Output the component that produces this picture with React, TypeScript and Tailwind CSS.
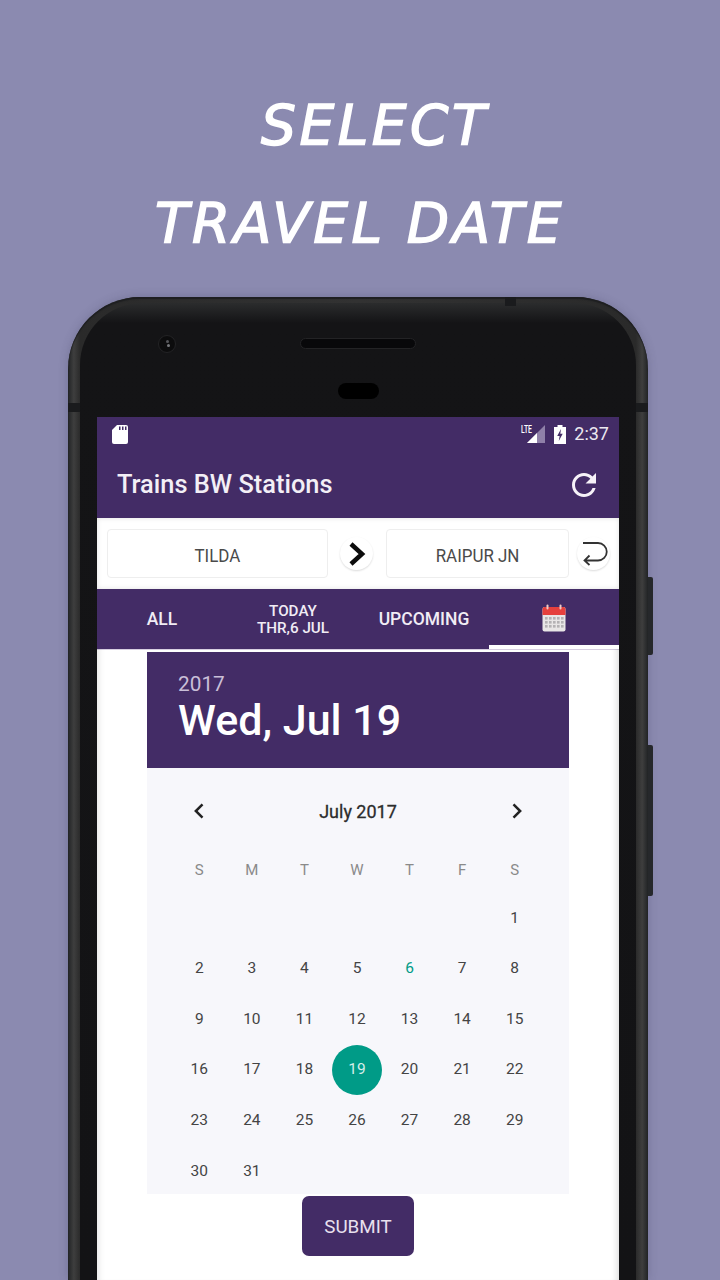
const purple = 'bg-[#432c66]'

const weeks = [
  ['', '', '', '', '', '', '1'],
  ['2', '3', '4', '5', '6', '7', '8'],
  ['9', '10', '11', '12', '13', '14', '15'],
  ['16', '17', '18', '19', '20', '21', '22'],
  ['23', '24', '25', '26', '27', '28', '29'],
  ['30', '31', '', '', '', '', ''],
]

function SdIcon() {
  return (
    <svg width="16" height="19" viewBox="0 0 16 19">
      <path d="M5 0h9a2 2 0 0 1 2 2v15a2 2 0 0 1-2 2H2a2 2 0 0 1-2-2V5z" fill="#fff" />
      <path d="M7 1.5h1.5v3.5H7zM10 1.5h1.5v3.5H10zM13 1.5h1.5v3.5H13z" fill="#432c66" />
    </svg>
  )
}

function SignalIcon() {
  return (
    <svg width="25" height="20" viewBox="0 0 25 20">
      <path d="M24 1v18H6z" fill="#8f80a8" />
      <path d="M16 9v10H6z" fill="#fff" />
      <text x="0" y="8.5" fill="#fff" fontSize="10" fontWeight="500" fontFamily="Roboto" textLength="11" lengthAdjust="spacingAndGlyphs">LTE</text>
    </svg>
  )
}

function BatteryIcon() {
  return (
    <svg width="12" height="19" viewBox="0 0 12 19">
      <path d="M3.5 0h5v2H12v17H0V2h3.5z" fill="#fff" />
      <path d="M7 4 3.2 11h2.4L4.8 16 8.7 8.8H6.3z" fill="#432c66" />
    </svg>
  )
}

function RefreshIcon() {
  return (
    <svg width="36" height="36" viewBox="0 0 24 24" fill="#f6f2f8">
      <path d="M17.65 6.35C16.2 4.9 14.21 4 12 4c-4.42 0-7.99 3.58-7.99 8s3.57 8 7.99 8c3.73 0 6.84-2.55 7.73-6h-2.08c-.82 2.33-3.04 4-5.65 4-3.31 0-6-2.69-6-6s2.69-6 6-6c1.66 0 3.14.69 4.22 1.78L13 11h7V4l-2.35 2.35z" />
    </svg>
  )
}

function CalendarIcon() {
  return (
    <svg width="24" height="28" viewBox="0 0 24 28">
      <rect x="0.5" y="3" width="23" height="24.5" rx="2" fill="#e8e6e6" />
      <path d="M0.5 11V5a2 2 0 0 1 2-2h19a2 2 0 0 1 2 2v6z" fill="#e5403d" />
      <rect x="4.5" y="0.5" width="2" height="5" rx="1" fill="#f1c9c4" />
      <rect x="17.5" y="0.5" width="2" height="5" rx="1" fill="#f1c9c4" />
      <g fill="#b4b2b4">
        {[13, 17, 21].map((y) =>
          [3, 7, 11, 15, 19].map((x) => <rect key={`${x}-${y}`} x={x} y={y} width="2.6" height="2.6" />),
        )}
      </g>
    </svg>
  )
}

function RoundButton({ children }: { children: React.ReactNode }) {
  return (
    <div className="flex h-[33px] w-[33px] items-center justify-center rounded-full bg-white shadow-[0_1px_2px_rgba(0,0,0,0.14)]">
      {children}
    </div>
  )
}

function Station({ name, width }: { name: string; width: string }) {
  return (
    <div className={`${width} flex h-[49px] items-center justify-center rounded-[4px] border border-[#eeeeee] bg-white pt-[3px] text-[18px] text-[#4a4a4a]`}>
      <span className="[transform:scaleX(0.94)]">{name}</span>
    </div>
  )
}

function Tabs() {
  return (
    <div className={`flex h-[60px] ${purple} text-[#f1ecf5] shadow-[0_1px_0_#d8d0e2]`}>
      <div className="flex w-[130px] items-center justify-center pt-[1px] text-[17.5px] font-medium">ALL</div>
      <div className="flex w-[132px] flex-col items-center justify-center pt-[2px] text-[15.2px] font-medium leading-[17px]">
        <span>TODAY</span>
        <span>THR,6 JUL</span>
      </div>
      <div className="flex w-[130px] items-center justify-center pt-[1px] text-[17.5px] font-medium">UPCOMING</div>
      <div className="flex w-[130px] items-center justify-center border-b-[4px] border-white pt-[1px]">
        <CalendarIcon />
      </div>
    </div>
  )
}

function CalendarCard() {
  return (
    <div className="mx-auto w-[422px] pt-[3px]">
      <div className={`flex h-[116px] flex-col ${purple} pl-[31px] pt-[20px]`}>
        <span className="text-[20.8px] leading-[24px] text-[#c9bfd8]">2017</span>
        <span className="text-[43px] font-medium leading-[48px] text-white">Wed, Jul 19</span>
      </div>
      <div className="h-[426px] bg-[#f7f7fb] pl-[26px] pr-[28px]">
        <div className="flex h-[86px] items-center justify-between pl-[17px] pr-[15px] text-[#222222]">
          <svg width="20" height="20" viewBox="0 0 24 24" fill="none" stroke="#222222" strokeWidth="3">
            <path d="m15 4-8 8 8 8" />
          </svg>
          <span className="text-[18px] text-[#2c2c2c] [-webkit-text-stroke:0.3px_#2c2c2c]">July 2017</span>
          <svg width="20" height="20" viewBox="0 0 24 24" fill="none" stroke="#222222" strokeWidth="3">
            <path d="m9 4 8 8-8 8" />
          </svg>
        </div>
        <div className="mt-[1px] grid h-[30px] grid-cols-7 items-center text-center text-[15px] text-[#8a8a8a]">
          {['S', 'M', 'T', 'W', 'T', 'F', 'S'].map((d, i) => (
            <span key={i}>{d}</span>
          ))}
        </div>
        <div className="mt-[8px] grid grid-cols-7 grid-rows-[repeat(6,50.6px)] text-[15.5px] text-[#444444]">
          {weeks.flat().map((d, i) => (
            <div key={i} className="flex items-center justify-center">
              {d === '19' ? (
                <span className="mb-[1px] flex h-[50px] w-[50px] items-center justify-center rounded-full bg-[#009b87] text-[#d5eeea]">19</span>
              ) : (
                <span className={d === '6' ? 'text-[#009b87]' : ''}>{d}</span>
              )}
            </div>
          ))}
        </div>
      </div>
      <div className={`mx-auto mt-[2px] flex h-[60px] w-[112px] items-center justify-center rounded-[7px] ${purple} pt-[2px] text-[18.8px] text-[#e8e0ee]`}>
        SUBMIT
      </div>
    </div>
  )
}

function Screen() {
  return (
    <div className="flex h-[863px] flex-col overflow-hidden bg-white">
      <div className={`flex h-[34px] shrink-0 items-center justify-between ${purple} pl-[15px] pr-[10px] text-white`}>
        <SdIcon />
        <div className="flex items-center gap-[8px]">
          <SignalIcon />
          <BatteryIcon />
          <span className="pb-[1px] text-[18px] leading-none text-[#ece8f0]">2:37</span>
        </div>
      </div>
      <div className={`flex h-[67px] shrink-0 items-center justify-between ${purple} pl-[20px] pr-[17px]`}>
        <span className="text-[25.4px] font-medium text-[#f3eff6]">Trains BW Stations</span>
        <RefreshIcon />
      </div>
      <div className="flex h-[71px] shrink-0 items-center pl-[10px] [box-shadow:inset_0_0_5px_rgba(0,0,0,0.12)]">
        <Station name="TILDA" width="w-[221px]" />
        <div className="ml-[12px] mr-[13px]">
          <RoundButton>
            <svg width="22" height="26" viewBox="0 0 22 26" fill="none" stroke="#0c0c0c" strokeWidth="4.5">
              <path d="m5 3 11 10L5 23" />
            </svg>
          </RoundButton>
        </div>
        <Station name="RAIPUR JN" width="w-[183px]" />
        <div className="ml-[8px]">
          <RoundButton>
            <svg width="28" height="26" viewBox="0 0 28 26" fill="none" stroke="#333333" strokeWidth="1.8">
              <path d="M3 2h15a8.75 8.75 0 0 1 0 17.5H5M9.5 14.5l-5 5 5 4.5" />
            </svg>
          </RoundButton>
        </div>
      </div>
      <Tabs />
      <div className="flex-1 [box-shadow:inset_7px_0_6px_-5px_rgba(0,0,0,0.1),inset_-7px_0_6px_-5px_rgba(0,0,0,0.14)]">
        <CalendarCard />
      </div>
    </div>
  )
}

export default function App() {
  return (
    <div className="h-[1280px] w-[720px] overflow-hidden bg-[#8b8ab0] font-['Roboto',sans-serif]">
      <div className="flex h-[297px] flex-col items-center pt-[76px] font-['DejaVu_Sans',sans-serif] text-[55px] italic leading-[98px] tracking-[3.5px] text-white [-webkit-text-stroke:1.5px_white]">
        <span className="ml-[30px] h-[98px]">SELECT</span>
        <span>TRAVEL DATE</span>
      </div>
      <div className="relative ml-[68px] h-[983px] w-[580px]">
        <div className="absolute right-[-5px] top-[280px] h-[78px] w-[5px] rounded-r-[2px] bg-[#26282b]" />
        <div className="absolute right-[-5px] top-[448px] h-[151px] w-[5px] rounded-r-[2px] bg-[#26282b]" />
        <div className="h-full rounded-t-[72px] bg-[linear-gradient(90deg,#222426_0%,#3e3e3e_1%,#2a2a2a_2.1%,#323232_50%,#2a2a2a_97.9%,#3e3e3e_99%,#222426_100%)] px-[12px] pt-[6px] shadow-[inset_0_2px_1px_#1e1f21,0_0_10px_rgba(50,50,80,0.25)]">
          <div className="relative h-full rounded-t-[62px] bg-[linear-gradient(180deg,#2b2c2d_0px,#141416_20px,#131315_100%)] px-[17px] pt-[114px]">
            <div className="absolute left-[78px] top-[32px] h-[18px] w-[18px] rounded-full border border-[#232325] bg-[#0c0c0d]">
              <div className="ml-[7px] mt-[4px] h-[3px] w-[3px] rounded-full bg-[#55565a]" />
              <div className="ml-[8px] mt-[1px] h-[3px] w-[3px] rounded-full bg-[#77787c]" />
            </div>
            <div className="absolute left-[220px] top-[35px] h-[11px] w-[116px] rounded-full border border-[#232325] bg-[#08080a]" />
            <div className="absolute left-[258px] top-[80px] h-[16px] w-[41px] rounded-full bg-black" />
            <Screen />
          </div>
        </div>
        <div className="absolute left-[437px] top-0 h-[9px] w-[11px] bg-[#1a1b1d]" />
        <div className="absolute left-0 top-[106px] h-[9px] w-[12px] bg-[#1a1b1d]" />
        <div className="absolute right-0 top-[106px] h-[9px] w-[12px] bg-[#1a1b1d]" />
      </div>
    </div>
  )
}
